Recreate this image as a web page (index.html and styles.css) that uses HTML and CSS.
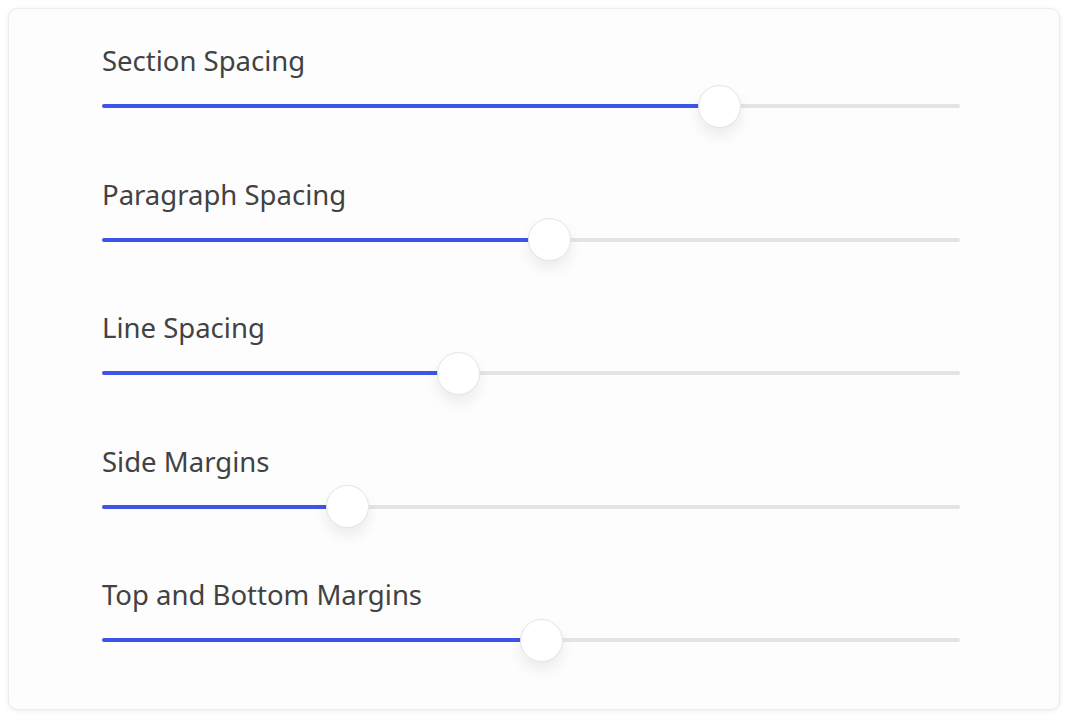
FILE: index.html
```html
<!DOCTYPE html>
<html lang="en">

<head>
  <meta charset="UTF-8">
  <title>Spacing Settings</title>
  <link rel="stylesheet" href="styles.css">
</head>

<body>

  <div class="card">
    <div class="setting">
      <p class="label">Section Spacing</p>
      <div class="track">
        <div class="fill" style="width: 72%"></div>
        <div class="thumb" style="left: 72%"></div>
      </div>
    </div>

    <div class="setting">
      <p class="label">Paragraph Spacing</p>
      <div class="track">
        <div class="fill" style="width: 52.1%"></div>
        <div class="thumb" style="left: 52.1%"></div>
      </div>
    </div>

    <div class="setting">
      <p class="label">Line Spacing</p>
      <div class="track">
        <div class="fill" style="width: 41.5%"></div>
        <div class="thumb" style="left: 41.5%"></div>
      </div>
    </div>

    <div class="setting">
      <p class="label">Side Margins</p>
      <div class="track">
        <div class="fill" style="width: 28.6%"></div>
        <div class="thumb" style="left: 28.6%"></div>
      </div>
    </div>

    <div class="setting">
      <p class="label">Top and Bottom Margins</p>
      <div class="track">
        <div class="fill" style="width: 51.2%"></div>
        <div class="thumb" style="left: 51.2%"></div>
      </div>
    </div>
  </div>

</body>

</html>
```

FILE: styles.css
```css
* {
  box-sizing: border-box;
  margin: 0;
  padding: 0;
}

body {
  font-family: "Noto Sans", Arial, sans-serif;
  background: #ffffff;
  color: #424242;
  padding: 8px;
}

.card {
  width: 1052px;
  height: 702px;
  background: #fdfdfd;
  border: 1px solid #e8edf3;
  border-radius: 10px;
  box-shadow: 0 1px 4px rgba(180, 195, 215, 0.35);
  padding: 34px 99px 0 93px;
  display: flex;
  flex-direction: column;
  gap: 68.5px;
}

.label {
  font-size: 27.5px;
  line-height: 36px;
  margin-bottom: 25px;
}

.track {
  position: relative;
  height: 4px;
  background: #e4e4e4;
  border-radius: 2px;
}

.fill {
  height: 100%;
  background: #3e54e8;
  border-radius: 2px;
}

.thumb {
  position: absolute;
  top: 50%;
  width: 43px;
  height: 43px;
  margin: -21.5px 0 0 -21.5px;
  background: #ffffff;
  border: 1px solid #e4e4e4;
  border-radius: 50%;
  box-shadow: 0 8px 14px rgba(0, 0, 0, 0.07);
}
```
